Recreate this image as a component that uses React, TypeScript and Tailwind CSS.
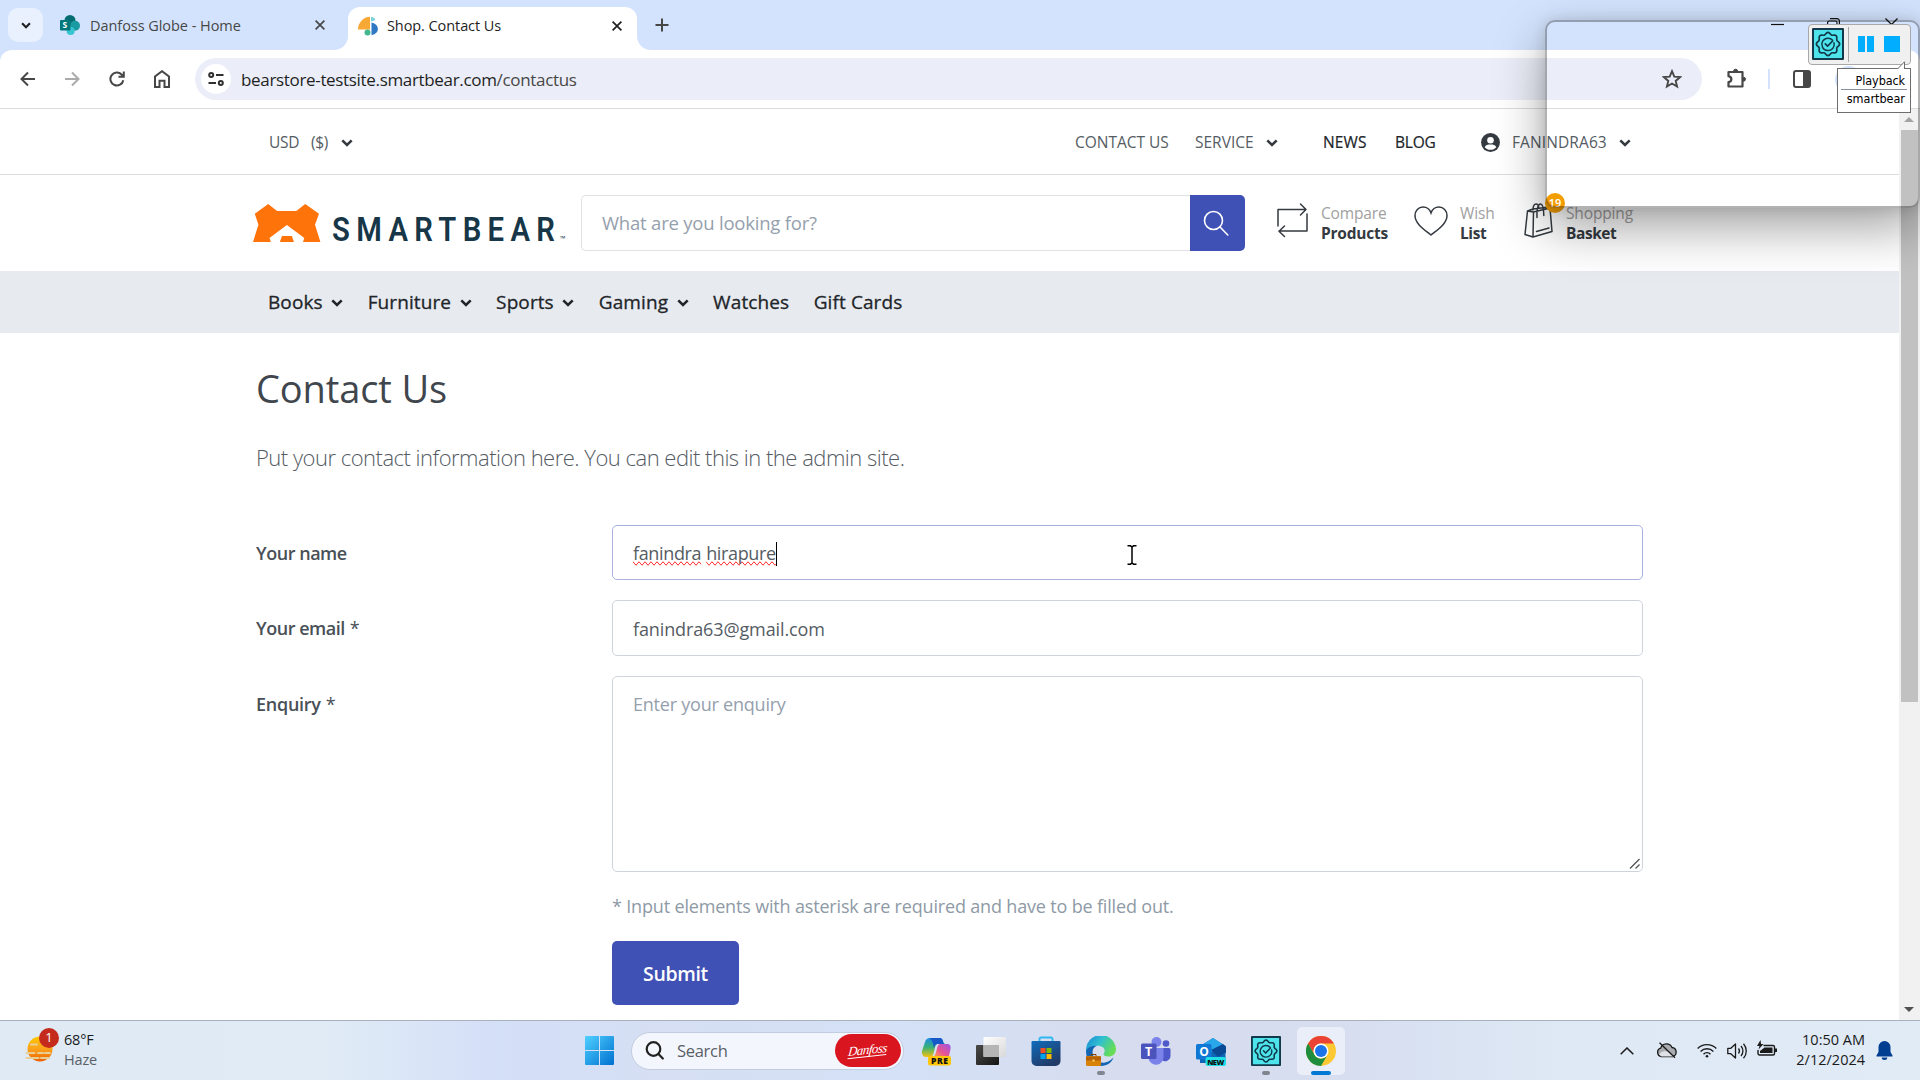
import type { ReactNode } from 'react';

const lobes = Array.from({ length: 96 }, (_, i) => {
  const a = (i / 96) * Math.PI * 2;
  const r = 10.6 + 1 * Math.cos(a * 8);
  return `${(16 + r * Math.cos(a)).toFixed(2)},${(16 + r * Math.sin(a)).toFixed(2)}`;
}).join(' ');

function GearBadge({ className }: { className: string }) {
  return (
    <svg viewBox="0 0 32 32" className={className} fill="none" stroke="#123a4c" strokeLinecap="round" strokeLinejoin="round">
      <rect x="1" y="1" width="30" height="30" fill="#4de4ec" strokeWidth="2" />
      <polygon points={lobes} strokeWidth="1.7" />
      <path d="M20.6 12.2a6.2 6.2 0 1 0 1.4 2.6" strokeWidth="1.5" />
      <path d="M13.3 15.8l2.3 2.4 5-5.2" strokeWidth="1.7" />
    </svg>
  );
}

function Chevron({ className = 'w-3 h-2 text-[#343a40]' }: { className?: string }) {
  return (
    <svg viewBox="0 0 12 8" className={className} fill="none" stroke="currentColor" strokeWidth="2.6">
      <path d="M1.3 1.4L6 6l4.7-4.6" />
    </svg>
  );
}

function CloseIcon({ className }: { className: string }) {
  return (
    <svg viewBox="0 0 10 10" className={className} stroke="currentColor" strokeWidth="1.7">
      <path d="M.6.6l8.8 8.8M9.4.6L.6 9.4" />
    </svg>
  );
}

function TabStrip() {
  return (
    <div className="flex h-[50px] items-end bg-[#d3e3fd]">
      <div className="mb-2 ml-2 flex h-[34px] w-[35px] items-center justify-center rounded-[10px] bg-[#e9f1fe]">
        <Chevron className="h-[7px] w-[10px] text-[#1f1f1f]" />
      </div>
      <div className="flex h-[50px] w-[291px] items-center pl-[17px]">
        <svg viewBox="0 0 20 20" className="h-5 w-5">
          <circle cx="10" cy="5.5" r="5.5" fill="#036c70" />
          <circle cx="15" cy="10.8" r="5" fill="#1a9ba1" />
          <circle cx="10.6" cy="16" r="4" fill="#37c6d0" />
          <rect x="0" y="5" width="10.5" height="10.5" rx="1" fill="#03787c" />
          <text x="2.6" y="13.3" fontSize="8.5" fontWeight="700" fill="#fff" fontFamily="Open Sans, sans-serif">S</text>
        </svg>
        <span className="ml-2.5 flex-1 whitespace-nowrap pt-px text-[14.5px] tracking-[-0.05px] text-[#474747]">Danfoss Globe - Home</span>
        <CloseIcon className="mr-[9px] h-[10px] w-[10px] text-[#474747]" />
      </div>
      <div className="flex h-[43px] items-end">
        <svg viewBox="0 0 14 14" className="h-[14px] w-[14px]"><path d="M14 0v14H0A14 14 0 0 0 14 0z" fill="#fff" /></svg>
      </div>
      <div className="flex h-[43px] w-[289px] items-center rounded-t-[12px] bg-white pb-[6px] pl-[10px]">
        <svg viewBox="0 0 20 20" className="h-5 w-5">
          <path d="M0 13.5A12.6 12.6 0 0 1 12 .8v12.7z" fill="#f8a834" />
          <path d="M13 1c1.200 0 3.500.6 4.200 2.200C16.500 5 14.500 5.500 13 5z" fill="#7bd3da" />
          <path d="M13.500 6.500c8.500 2 8.500 11 0 12.700z" fill="#2f78c4" />
          <circle cx="9.500" cy="16.600" r="3" fill="#43b88c" />
        </svg>
        <span className="ml-[9px] flex-1 whitespace-nowrap text-[14.5px] tracking-[-0.08px] text-[#1f1f1f]">Shop. Contact Us</span>
        <CloseIcon className="mr-[15px] h-[10px] w-[10px] text-[#1f1f1f]" />
      </div>
      <svg viewBox="0 0 14 14" className="h-[14px] w-[14px]"><path d="M0 0v14h14A14 14 0 0 1 0 0z" fill="#fff" /></svg>
      <div className="flex h-[50px] items-center pl-[4px]">
        <svg viewBox="0 0 14 14" className="h-[14px] w-[14px]" stroke="#474747" strokeWidth="2"><path d="M7 .5v13M.5 7h13" /></svg>
      </div>
      <div className="mb-[19px] ml-auto mr-[22px] flex items-center">
        <svg viewBox="0 0 13 13" className="h-[13px] w-[13px]" stroke="#111" strokeWidth="1.200"><path d="M0 6.500h13" /></svg>
        <svg viewBox="0 0 13 13" className="ml-[43px] h-[13px] w-[13px]" fill="none" stroke="#111" strokeWidth="1.200">
          <rect x=".6" y="3" width="9.400" height="9.400" rx="1.500" /><path d="M3 .7h7a2.400 2.400 0 0 1 2.400 2.400v7" />
        </svg>
        <svg viewBox="0 0 13 13" className="ml-[45px] h-[13px] w-[13px]" stroke="#111" strokeWidth="1.200"><path d="M.5.5l12 12M12.500.5l-12 12" /></svg>
      </div>
    </div>
  );
}

function AddressBar() {
  return (
    <div className="bg-[#d3e3fd]">
      <div className="flex h-[59px] items-center rounded-t-[12px] border-b border-[#dadce0] bg-white">
        <svg viewBox="0 0 16 16" className="ml-5 h-4 w-4" fill="none" stroke="#474747" strokeWidth="2"><path d="M15 8H2M8 1.500L1.500 8 8 14.500" /></svg>
        <svg viewBox="0 0 16 16" className="ml-7 h-4 w-4" fill="none" stroke="#ababab" strokeWidth="2"><path d="M1 8h13M8 1.500L14.500 8 8 14.500" /></svg>
        <svg viewBox="0 0 16 16" className="ml-[29px] h-4 w-4" fill="none" stroke="#474747" strokeWidth="2"><path d="M14.300 9.200A6.500 6.500 0 1 1 12.600 3.500L14.500 5.600M14.800.5v5.300H9.500" /></svg>
        <svg viewBox="0 0 18 18" className="ml-[28px] h-[18px] w-[18px]" fill="none" stroke="#474747" strokeWidth="2"><path d="M2 17V6.500l7-5.300 7 5.300V17h-4.500v-6.300h-5V17z" /></svg>
        <div className="ml-[24px] flex h-[42px] w-[1507px] items-center rounded-full bg-[#ebeef8] pl-[6px] pr-[20px]">
          <div className="flex h-[30px] w-[30px] items-center justify-center rounded-full bg-white">
            <svg viewBox="0 0 16 14" className="h-[14px] w-4" fill="none" stroke="#303030" strokeWidth="2">
              <circle cx="3.200" cy="3" r="2" /><path d="M8 3h7.500M.5 11H8" /><circle cx="12.800" cy="11" r="2" />
            </svg>
          </div>
          <span className="ml-[10px] whitespace-nowrap pt-px text-[17px] tracking-[-0.33px] text-[#1f1f1f]">
            bearstore-testsite.smartbear.com<span className="text-[#474747]">/contactus</span>
          </span>
          <svg viewBox="0 0 20 20" className="ml-auto h-5 w-5" fill="none" stroke="#474747" strokeWidth="1.900">
            <path d="M10 2.200l2.300 5.400 5.900.5-4.500 3.800 1.400 5.700L10 14.500l-5.100 3.100 1.400-5.700L1.800 8.100l5.900-.5z" />
          </svg>
        </div>
        <svg viewBox="0 0 22 22" className="ml-[24px] mt-[-2px] h-[22px] w-[22px]" fill="none" stroke="#474747" strokeWidth="2.200" strokeLinejoin="round">
          <path d="M2.500 5h14v14.500h-14v-4.300c3.800-.8 3.800-5.200 0-6z" />
          <path d="M7.600 4.200a2 2 0 0 1 4 0zM17.500 10.200a2 2 0 0 1 0 4z" fill="#474747" strokeWidth="1" />
        </svg>
        <div className="ml-[20px] h-5 w-[2px] bg-[#d3e3fd]" />
        <div className="ml-[23px] flex h-[18px] w-[18px] justify-end rounded-[3px] border-2 border-[#474747]"><div className="w-[6px] bg-[#474747]" /></div>
        <div className="ml-6 h-[27px] w-[27px] rounded-full bg-[#d3e3fd]" />
      </div>
    </div>
  );
}

function TopMenu() {
  return (
    <div className="h-[66px] border-b border-[#dcdee0]">
      <div className="flex h-full items-center whitespace-nowrap pl-[269px] pt-0.5 text-[15.5px] text-[#555c63]">
        <span className="w-[42px] tracking-[-0.3px]">USD</span>
        <span className="w-[30px] tracking-[-0.4px]">($)</span>
        <Chevron />
        <span className="ml-[722px] w-[120px] tracking-[-0.03px]">CONTACT US</span>
        <span className="w-[71px]">SERVICE</span>
        <Chevron />
        <span className="ml-[45px] w-[72px] font-medium tracking-[0.1px] text-[#212529] [-webkit-text-stroke:0.2px]">NEWS</span>
        <span className="w-[86px] font-medium tracking-[-0.2px] text-[#212529] [-webkit-text-stroke:0.2px]">BLOG</span>
        <svg viewBox="0 0 19 19" className="h-[19px] w-[19px]">
          <circle cx="9.500" cy="9.500" r="9.400" fill="#343a40" />
          <circle cx="9.500" cy="7.200" r="3.300" fill="#fff" />
          <path d="M3.700 14.200c1-2.300 3-2.700 5.800-2.700s4.800.4 5.800 2.700c-2.600 3.400-9 3.400-11.600 0z" fill="#fff" />
        </svg>
        <span className="ml-[12px] w-[107px] tracking-[0.1px]">FANINDRA63</span>
        <Chevron />
      </div>
    </div>
  );
}

function HeaderTool({ icon, top, bottom, className }: { icon: ReactNode; top: string; bottom: ReactNode; className: string }) {
  return (
    <div className={className}>
      {icon}
      <div className="text-[15.5px] leading-5">
        <div className="tracking-[-0.15px] text-[#a0a0a0]">{top}</div>
        <div className="font-bold text-[#343a40]">{bottom}</div>
      </div>
    </div>
  );
}

function ShopHeader() {
  return (
    <div className="flex h-24 items-center pl-[253px]">
      <svg viewBox="0 0 68 38" className="h-[38px] w-[68px]" fill="#ff730b">
        <path d="M0 38L5.400 20.700 1.800 9.700 15.200 0l8.900 7h19.200l8.900-7L66 9.700l-4 11L67.400 38H50l1.300-4L33.900 21 16.500 34l1.400 4z" />
        <path d="M26.800 38L29 32h9.800l2.200 6z" />
      </svg>
      <div className="ml-[11px] mt-[12px] flex w-[249px] items-end text-[#173647]">
        <span className="w-[228px] origin-left scale-x-[0.86] font-['Roboto'] text-[34px] font-semibold leading-[34px] tracking-[7.4px]">SMARTBEAR</span>
        <span className="mb-[5px] text-[7px] leading-[5px]">™</span>
      </div>
      <div className="flex h-14 w-[664px]">
        <div className="flex flex-1 items-center rounded-l-[5px] border border-r-0 border-[#dfe1e4] pl-5 text-[18.5px] tracking-[-0.21px] text-[#95a0ad]">What are you looking for?</div>
        <div className="flex w-[55px] items-center justify-center rounded-r-[5px] bg-[#3f51b5] pb-px pr-[3px]">
          <svg viewBox="0 0 26 26" className="h-[26px] w-[26px]" fill="none" stroke="#fff" strokeWidth="1.600" strokeLinecap="round"><circle cx="10.500" cy="10.500" r="9" /><path d="M17 17l7.800 8" /></svg>
        </div>
      </div>
      <HeaderTool
        className="ml-8 flex w-[137px] items-center gap-[13px]"
        icon={<svg viewBox="0 0 31 36" className="-mt-1.5 h-9 w-[31px]" fill="none" stroke="#343a40" strokeWidth="1.500" strokeLinecap="round" strokeLinejoin="round"><path d="M1 24V7.500h28M23.500 2L29 7.500 23.500 13M30 12v17H2M7.500 24L2 29.300l5.500 5.200" /></svg>}
        top="Compare"
        bottom={<span className="tracking-[-0.22px]">Products</span>}
      />
      <HeaderTool
        className="flex w-[109px] items-center gap-[12px]"
        icon={<svg viewBox="0 0 34 30" className="-mt-[4px] h-[30px] w-[34px]" fill="none" stroke="#343a40" strokeWidth="1.500"><path d="M17 29C11 24 1 18 1 9.500 1 4.800 4.500 1 9 1c3.800 0 6.700 2.200 8 6 1.300-3.800 4.200-6 8-6 4.500 0 8 3.800 8 8.500C33 18 23 24 17 29z" /></svg>}
        top="Wish"
        bottom={<span className="tracking-[-0.4px]">List</span>}
      />
      <div className="relative ml-px">
        <HeaderTool
          className="flex items-center gap-[13px]"
          icon={<svg viewBox="0 0 29 35" className="-mt-1.5 h-[35px] w-[29px]" fill="none" stroke="#343a40" strokeWidth="1.500" strokeLinejoin="round" strokeLinecap="round"><path d="M3.500 8L1 31.500l8 2.500L28 28.500 26 5 9.500 9zM9.500 9L9 34M3.500 8l5.500-2 16-2M9 7c0-4.500 1.500-6 3.200-6 1.600 0 2.300 1.500 2.600 4M13 14.500c-.3-9 1-13.500 3.500-13.500 2.300 0 3.200 3.500 3.300 11.500M12.500 28.500L25 25" /></svg>}
          top="Shopping"
          bottom={<span className="tracking-[-0.45px]">Basket</span>}
        />
        <span className="absolute -top-[10px] left-[21px] flex h-5 w-5 items-center justify-center rounded-full bg-[#f29d00] text-[11px] font-semibold text-white">19</span>
      </div>
    </div>
  );
}

const categories: { label: string; menu: boolean }[] = [
  { label: 'Books', menu: true },
  { label: 'Furniture', menu: true },
  { label: 'Sports', menu: true },
  { label: 'Gaming', menu: true },
  { label: 'Watches', menu: false },
  { label: 'Gift Cards', menu: false },
];

function CategoryNav() {
  return (
    <div className="flex h-[62px] items-center gap-[24.5px] bg-[#e7eaef] pl-[268px] text-[19px] font-medium tracking-[0.1px] text-[#212529] [-webkit-text-stroke:0.3px]">
      {categories.map((c) => (
        <div key={c.label} className="flex items-center gap-[8.5px]">
          {c.label}
          {c.menu && <Chevron className="mt-0.5 h-2 w-3 text-[#212529]" />}
        </div>
      ))}
    </div>
  );
}

function ContactForm() {
  return (
    <div className="pl-[256px] pt-8 text-[18px] text-[#555c63]">
      <h1 className="text-[38px] leading-[46px] tracking-[-0.12px] text-[#3f464d]">Contact Us</h1>
      <p className="mt-[30px] text-[22px] font-light leading-[33px] tracking-[-0.5px]">Put your contact information here. You can edit this in the admin site.</p>
      <div className="mt-[51px] grid w-[1387px] grid-cols-[356px_1fr]">
        <label className="flex h-[55px] items-center pt-0.5 font-semibold tracking-[-0.47px] text-[#495057]">Your name</label>
        <div className="flex h-[55px] items-center rounded-[5px] border border-[#a8b1e0] pl-5 pt-0.5 tracking-[-0.36px]">
          <span className="[text-decoration-line:spelling-error]">fanindra</span>
          <span className="ml-[5px] [text-decoration-line:spelling-error]">hirapure</span>
          <span className="h-6 w-px bg-black" />
        </div>
        <label className="mt-5 flex h-14 items-center pt-px font-semibold tracking-[-0.47px] text-[#495057]">Your email<span className="ml-[5px] font-normal">*</span></label>
        <div className="mt-5 flex h-14 items-center rounded-[5px] border border-[#ced4da] pl-5 pt-0.5 tracking-[-0.12px]">fanindra63@gmail.com</div>
        <label className="mt-5 pt-[15px] font-semibold leading-[27px] tracking-[-0.27px] text-[#495057]">Enquiry<span className="ml-[5px] font-normal">*</span></label>
        <div className="mt-5 flex h-[196px] justify-between rounded-[5px] border border-[#ced4da] pl-5 pt-[14px] leading-[27px] tracking-[-0.22px] text-[#95a0ad]">
          Enter your enquiry
          <svg viewBox="0 0 11 11" className="mb-0.5 mr-0.5 h-[11px] w-[11px] self-end" stroke="#555" strokeWidth="1.300"><path d="M1 10.500l9.500-9.500M6.500 10.500l4-4" /></svg>
        </div>
        <p className="col-start-2 mt-[21px] leading-[27px] tracking-[-0.17px] text-[#8e9aa6]">* Input elements with asterisk are required and have to be filled out.</p>
        <button className="col-start-2 mt-[21px] h-16 w-[127px] rounded-[5px] bg-[#3f51b5] pt-0.5 text-[19.5px] font-semibold tracking-[-0.33px] text-white">Submit</button>
      </div>
    </div>
  );
}

function Scrollbar() {
  return (
    <div className="flex w-[21px] flex-col items-center bg-[#f1f1f1] pr-px">
      <div className="flex h-[21px] items-center"><div className="border-x-[5px] border-b-[5px] border-x-transparent border-b-[#a3a3a3]" /></div>
      <div className="h-[572px] w-[17px] bg-[#c1c1c1]" />
      <div className="mt-auto flex h-[21px] items-center"><div className="border-x-[5px] border-t-[5px] border-x-transparent border-t-[#505050]" /></div>
    </div>
  );
}

function PlaybackOverlay() {
  return (
    <>
      <div className="absolute left-[1545px] top-5 h-[188px] w-[375px] rounded-[10px] border-2 border-black/30 shadow-[0_20px_50px_rgba(0,0,0,0.36),0_0_14px_rgba(0,0,0,0.12)]" />
      <div className="absolute left-[1808px] top-6 flex h-[41px] w-[103px] items-center rounded-[4px] border border-[#a8a8a8] bg-[#f0f0f0] pb-px pl-[3px]">
        <GearBadge className="h-8 w-8" />
        <div className="ml-1 h-[35px] w-px bg-[#a8a8a8]" />
        <div className="ml-[9px] flex h-4 w-4 justify-between"><div className="w-[7px] bg-[#00adff]" /><div className="w-[7px] bg-[#00adff]" /></div>
        <div className="ml-[10px] h-4 w-4 bg-[#00adff]" />
      </div>
      <div className="absolute left-[1837px] top-[68px] h-[45px] w-[74px] border border-[#6e6e6e] bg-white px-[3px] pt-[3px] text-right font-['DejaVu_Sans_Condensed','DejaVu_Sans'] text-[12.5px] leading-[17px] text-black">
        <svg viewBox="0 0 10 9" className="absolute -top-[8px] right-[3px] h-[9px] w-[10px]"><path d="M.5 8L7.500.8V8" fill="#fff" stroke="#6e6e6e" /><path d="M1 8.500h6" stroke="#fff" /></svg>
        <div className="border-b border-[#8a8fa0] pr-[2px] tracking-[-0.1px]">Playback</div>
        <div className="whitespace-nowrap pr-[2px]">smartbear</div>
      </div>
    </>
  );
}

function TaskSlot({ children, running = false }: { children: ReactNode; running?: boolean }) {
  return (
    <div className="flex h-12 w-[55px] flex-col items-center pt-[9px]">
      {children}
      {running && <div className="mt-[5px] h-1 w-2 rounded-full bg-[#80858f]" />}
    </div>
  );
}

function Taskbar() {
  return (
    <div className="flex h-[60px] items-center border-t border-[#a9b1bb] bg-[linear-gradient(90deg,#dfeaf4_0%,#e0ebf6_17%,#d4dff8_26%,#d6dff3_35%,#d4e1f6_47%,#d7dcee_58%,#d6def0_70%,#dfe9f5_82%,#e0ebf6_100%)]">
      <div className="relative ml-[25px] mt-[-5px] h-[30px] w-[28px]">
        <svg viewBox="0 0 28 30" className="h-[30px] w-[28px]">
          <defs><linearGradient id="sun" x1="0" y1="0" x2="0" y2="1"><stop offset="0" stopColor="#fdc800" /><stop offset=".5" stopColor="#fba21c" /><stop offset="1" stopColor="#ec5f00" /></linearGradient></defs>
          <circle cx="15" cy="16" r="12.500" fill="url(#sun)" />
          <path d="M6 11.500h6M1.500 20h8M13 20h5M20 20h5M1.500 25h12M16 25h8" stroke="#e8cf95" strokeWidth="2" strokeLinecap="round" />
        </svg>
        <span className="absolute -top-[5px] left-[14px] flex h-5 w-5 items-center justify-center rounded-full bg-[#c42b1c] text-[13px] text-white">1</span>
      </div>
      <div className="-mt-0.5 ml-[11px] w-[521px] text-[14.5px] leading-5">
        <div className="tracking-[-0.2px] text-[#1b1b1b]">68°F</div>
        <div className="tracking-[-0.15px] text-[#5a6068]">Haze</div>
      </div>
      <svg viewBox="0 0 29 29" className="h-[29px] w-[29px]">
        <defs><linearGradient id="win" x1="0" y1="0" x2="1" y2="1"><stop offset="0" stopColor="#4fd0ff" /><stop offset="1" stopColor="#0070d0" /></linearGradient></defs>
        <path d="M1 0h13v14H0V1a1 1 0 0 1 1-1zM15 0h13a1 1 0 0 1 1 1v13H15zM0 15h14v14H1a1 1 0 0 1-1-1zM15 15h14v13a1 1 0 0 1-1 1H15z" fill="url(#win)" />
      </svg>
      <div className="ml-[17px] mr-[4px] flex h-[38px] w-[273px] items-center rounded-full border border-[#c3cde0] bg-[#f3f6fd] pl-[13px] pr-0.5">
        <svg viewBox="0 0 19 19" className="h-[19px] w-[19px]" fill="none" stroke="#222" strokeWidth="2.200" strokeLinecap="round"><circle cx="8.500" cy="8" r="6.800" /><path d="M13.500 13l4.300 4.500" /></svg>
        <span className="ml-[13px] flex-1 pt-px text-[16.5px] tracking-[-0.3px] text-[#5b5f66]">Search</span>
        <div className="flex h-[33px] w-[66px] items-center justify-center rounded-full bg-[#d9161f]">
          <span className="-skew-x-12 -rotate-6 border-b border-white font-['Liberation_Serif'] text-[13px] italic leading-[12px] tracking-[-0.5px] text-white">Danfoss</span>
        </div>
      </div>
      <TaskSlot>
        <svg viewBox="0 0 30 30" className="h-[30px] w-[30px]">
          <defs>
            <linearGradient id="cpa" x1="0" y1="0" x2="0" y2="1"><stop offset="0" stopColor="#1a8be8" /><stop offset=".5" stopColor="#3bb273" /><stop offset="1" stopColor="#f4c20d" /></linearGradient>
            <linearGradient id="cpb" x1="1" y1="0" x2="0" y2="1"><stop offset="0" stopColor="#9a55e8" /><stop offset=".6" stopColor="#e8558f" /><stop offset="1" stopColor="#ff9a4d" /></linearGradient>
          </defs>
          <path d="M9 2h10c3 0 2.500 4 5 6h-7c-3 0-3 4-4 8s-2 5-5 5H5c-3 0-4.500-3-4-6L4 6c1-3 2.500-4 5-4z" fill="url(#cpa)" />
          <path d="M8 2h11c3 0 2.500 4 4 6h-6c-3 0-3 2-4 4-1-5-2-9-5-10z" fill="#1659c7" />
          <path d="M19 8h7c3 0 4 2 3.500 5L28 20H13c3-2 2.500-12 6-12z" fill="url(#cpb)" />
          <rect x="7" y="20" width="23" height="9.500" rx="2" fill="#ffc60a" />
          <text x="10" y="28" fontSize="8.500" fontWeight="800" textLength="17" fontFamily="Open Sans, sans-serif" fill="#111">PRE</text>
        </svg>
      </TaskSlot>
      <TaskSlot>
        <svg viewBox="0 0 30 30" className="h-[30px] w-[30px]">
          <defs>
            <linearGradient id="tvd" x1="0" y1="0" x2="1" y2="1"><stop offset="0" stopColor="#4a4a48" /><stop offset="1" stopColor="#151515" /></linearGradient>
            <linearGradient id="tvl" x1="0" y1="0" x2="1" y2="1"><stop offset="0" stopColor="#fff" /><stop offset="1" stopColor="#d8d8d8" /></linearGradient>
          </defs>
          <rect x="0" y="9" width="23" height="20" rx="1" fill="url(#tvd)" />
          <rect x="7.500" y="1" width="22.500" height="20" rx="1" fill="url(#tvl)" />
          <rect x="7.500" y="9" width="15.500" height="12" fill="#b5b5b5" />
        </svg>
      </TaskSlot>
      <TaskSlot>
        <svg viewBox="0 0 30 30" className="h-[30px] w-[30px]">
          <defs><linearGradient id="ms" x1="0" y1="0" x2=".6" y2="1"><stop offset="0" stopColor="#0f6cbd" /><stop offset="1" stopColor="#223a66" /></linearGradient></defs>
          <path d="M8.500 6V3.200a1.700 1.700 0 0 1 1.700-1.700h9.600a1.700 1.700 0 0 1 1.700 1.700V6" fill="none" stroke="#30b7f0" strokeWidth="1.900" />
          <path d="M.5 6a1 1 0 0 1 1-1h27a1 1 0 0 1 1 1v19a5 5 0 0 1-5 5h-19a5 5 0 0 1-5-5z" fill="url(#ms)" />
          <path d="M9.500 12h5v5h-5z" fill="#f25022" /><path d="M15.500 12h5v5h-5z" fill="#7fba00" />
          <path d="M9.500 18h5v5h-5z" fill="#00a4ef" /><path d="M15.500 18h5v5h-5z" fill="#ffb900" />
        </svg>
      </TaskSlot>
      <TaskSlot running>
        <svg viewBox="0 0 30 30" className="h-[30px] w-[30px]">
          <defs>
            <linearGradient id="ea" x1="0" y1="0" x2="1" y2=".5"><stop offset="0" stopColor="#1a84d8" /><stop offset=".5" stopColor="#2fc0d0" /><stop offset="1" stopColor="#66dd55" /></linearGradient>
          </defs>
          <path d="M0 15A15 15 0 0 1 30 13c0 5-3.500 7.500-7.500 7.500-3.500 0-5-1-5-2.200 0-1 1.200-1.500 1.200-3.500 0-2.500-2.500-5-7-5C6 9.800 1.500 12 0 17z" fill="url(#ea)" />
          <path d="M0 15.500C1.500 11 6.500 9.500 11 9.800c-4 1.500-5 5-4 9.200 1.500 5.500 7 8.500 12 7.500 4-.8 6.500-3 8.500-5-1.500 4.500-6 8.500-12.500 8.500C6 30 0 23.500 0 15.500z" fill="#1464b4" />
          <rect x="0" y="20" width="15" height="10" rx="1.200" fill="#d88208" />
          <path d="M0 20.500h15v4H0z" fill="#b5610a" /><path d="M5 20v-1.500h5V20" fill="none" stroke="#7a4200" /><path d="M6.500 23.500h2v2h-2z" fill="#ffd36b" />
        </svg>
      </TaskSlot>
      <TaskSlot>
        <svg viewBox="0 0 30 30" className="h-[30px] w-[30px]">
          <circle cx="15.500" cy="6" r="5" fill="#7b83eb" /><circle cx="25" cy="7.500" r="3.300" fill="#5059c9" />
          <path d="M20 12h8a1.500 1.500 0 0 1 1.500 1.500V20a5.500 5.500 0 0 1-9.500 3.500z" fill="#5059c9" />
          <path d="M9 12h13.500v8.500a7.500 7.500 0 0 1-15 1.500z" fill="#7b83eb" />
          <rect x="0" y="7.500" width="15.500" height="15.500" rx="1.500" fill="#4b53bc" />
          <text x="4" y="19.500" fontSize="12.500" fontWeight="700" fontFamily="Open Sans, sans-serif" fill="#fff">T</text>
        </svg>
      </TaskSlot>
      <TaskSlot>
        <svg viewBox="0 0 30 30" className="h-[30px] w-[30px]">
          <path d="M4 10L17 2l12.500 8v14a3 3 0 0 1-3 3H4z" fill="#1066b5" />
          <path d="M7 8.500L17 2l10 6.500L14 17z" fill="#28a8ea" />
          <path d="M15 14L27 8l3 2.500v6L22 21z" fill="#0a4a94" />
          <rect x="0" y="8" width="15.500" height="15.500" rx="1.500" fill="#0f78d4" />
          <text x="3.200" y="20" fontSize="12" fontWeight="700" fontFamily="Open Sans, sans-serif" fill="#fff">O</text>
          <rect x="9.500" y="21" width="20.500" height="9" rx="2" fill="#1fe0e6" />
          <text x="11.200" y="28.500" fontSize="7.500" fontWeight="800" textLength="17" fontFamily="Open Sans, sans-serif" fill="#111">NEW</text>
        </svg>
      </TaskSlot>
      <TaskSlot running><GearBadge className="h-[30px] w-[30px]" /></TaskSlot>
      <div className="ml-[4px] flex h-12 w-12 flex-col items-center rounded-[5px] bg-[#eaeef8] pt-[9px]">
        <svg viewBox="0 0 30 30" className="h-[30px] w-[30px]">
          <circle cx="15" cy="15" r="15" fill="#fcc934" />
          <path d="M2 7.500A15 15 0 0 1 28 7.500H15a7.500 7.500 0 0 0-6.500 11.200z" fill="#ea4335" />
          <path d="M2 7.500A15 15 0 0 0 15 30l6.500-11.200a7.500 7.500 0 0 1-13 0z" fill="#1e8e3e" />
          <circle cx="15" cy="15" r="7.500" fill="#fff" /><circle cx="15" cy="15" r="6" fill="#1a73e8" />
        </svg>
        <div className="mt-[5px] h-1 w-5 rounded-full bg-[#0078d4]" />
      </div>
      <div className="ml-auto mr-[27px] flex items-center text-[#1b1b1b]">
        <svg viewBox="0 0 14 8" className="h-2 w-[14px]" fill="none" stroke="currentColor" strokeWidth="1.500"><path d="M.7 7.300L7 1l6.300 6.300" /></svg>
        <svg viewBox="0 0 22 17" className="ml-[22px] h-[17px] w-[22px]" stroke="#1b1b1b" strokeWidth="1.300"><path d="M5.500 14.500a4.300 4.300 0 0 1-.8-8.400A6 6 0 0 1 16 5.500a4.600 4.600 0 0 1 .8 9z" fill="#a9adb2" /><path d="M3 12.500c3-4 7-4 10-2l5 4H5.500z" fill="#dfe3e8" stroke="none" /><path d="M3.500.8l15.500 15" /></svg>
        <svg viewBox="0 0 20 15" className="ml-[19px] h-[15px] w-5" fill="none" stroke="currentColor" strokeWidth="1.400"><path d="M.7 5.500a13 13 0 0 1 18.600 0M3.600 8.400a9 9 0 0 1 12.800 0M6.500 11.200a5 5 0 0 1 7 0" /><circle cx="10" cy="13.200" r="1.300" fill="currentColor" stroke="none" /></svg>
        <svg viewBox="0 0 20 18" className="ml-[10px] h-[18px] w-5" fill="none" stroke="currentColor" strokeWidth="1.300" strokeLinejoin="round"><path d="M.8 6.300h3L8.500 2v14l-4.700-4.300h-3zM11.500 6.500a4 4 0 0 1 0 5M14 4a7.500 7.500 0 0 1 0 10M16.500 1.700a11 11 0 0 1 0 14.600" /></svg>
        <svg viewBox="0 0 20 18" className="-mt-1 ml-[10px] h-[18px] w-5" fill="none" stroke="currentColor" strokeWidth="1.400"><path d="M6.500 5.500H16a1.500 1.500 0 0 1 1.500 1.500v6.500A1.500 1.500 0 0 1 16 15H2.500A1.500 1.500 0 0 1 1 13.500V10" /><path d="M7.500 7.500h8v5.500H3v-2z" fill="currentColor" stroke="none" /><path d="M18 8.500h2v3.500h-2zM3.500 0L0 6h2.500L1.500 9.500 6.500 4H4z" fill="currentColor" stroke="none" /></svg>
        <div className="-mt-0.5 ml-[19px] text-right text-[14.5px] leading-5"><div>10:50 AM</div><div>2/12/2024</div></div>
        <svg viewBox="0 0 17 19" className="ml-[11px] h-[19px] w-[17px]" fill="#003e92"><path d="M8.500 0a6 6 0 0 1 6 6v5l2 3.500v1H.5v-1l2-3.500V6a6 6 0 0 1 6-6zM5.700 16.500h5.600a2.800 2.500 0 0 1-5.600 0z" /></svg>
      </div>
    </div>
  );
}

export default function App() {
  return (
    <div className="relative flex h-[1080px] w-[1920px] flex-col overflow-hidden bg-white font-['Open_Sans','Noto_Sans',sans-serif]">
      <TabStrip />
      <AddressBar />
      <div className="flex min-h-0 flex-1">
        <div className="flex-1 overflow-hidden">
          <TopMenu />
          <ShopHeader />
          <CategoryNav />
          <ContactForm />
        </div>
        <Scrollbar />
      </div>
      <Taskbar />
      <PlaybackOverlay />
      <svg viewBox="0 0 10 20" className="absolute left-[1127px] top-[545px] h-5 w-[10px]" fill="none" stroke="#000" strokeWidth="1.500"><path d="M.5.8h3L5 2 6.500.8h3M5 2v16M.5 19.200h3L5 18l1.500 1.200h3" /></svg>
    </div>
  );
}
